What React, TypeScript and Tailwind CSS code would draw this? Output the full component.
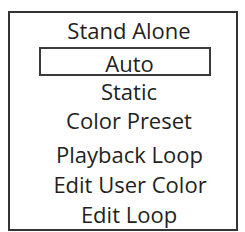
export default function App() {
  return (
    <div className="w-[245px] h-[232px] bg-white pt-[11px] pl-[8px]">
      <div
        className="w-[230px] h-[220px] border-2 border-[#333333] flex flex-col text-center text-[22px] text-[#231f20] pt-[2px]"
        style={{ fontFamily: '"Open Sans", sans-serif' }}
      >
        <div className="h-[32px] leading-[30px] pl-[12px]">Stand Alone</div>
        <div className="ml-[29px] w-[172px] h-[29px] border-2 border-[#3a3a3a] leading-[28px] pl-[9px]">
          Auto
        </div>
        <div className="h-[29px] leading-[30px] pl-[12px]">Static</div>
        <div className="h-[34px] leading-[30px] pl-[12px]">Color Preset</div>
        <div className="h-[30px] leading-[30px] pl-[13px]">Playback Loop</div>
        <div className="h-[30px] leading-[30px] pl-[14px]">Edit User Color</div>
        <div className="h-[30px] leading-[30px] pl-[12px]">Edit Loop</div>
      </div>
    </div>
  );
}
